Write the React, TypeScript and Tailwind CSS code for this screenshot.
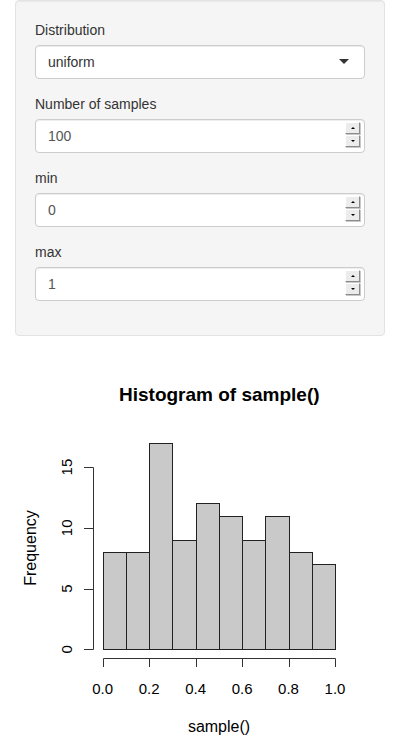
import React from "react";

const font = { fontFamily: '"Liberation Sans", Arial, Helvetica, sans-serif' };

const counts = [8, 8, 17, 9, 12, 11, 9, 11, 8, 7];

// plot geometry (page coordinates, svg viewBox is offset to match)
const X0 = 102.7;
const X1 = 335;
const Y0 = 649.3;
const PER = 12.15;
const bw = (X1 - X0) / 10;
const px = (v: number) => Math.round(v) + 0.5;

const SpinButton = ({ up }: { up: boolean }) => (
  <div className="w-[15px] h-[12px] bg-[#ececec] border border-t-white border-l-white border-r-[#8c8c8c] border-b-[#8c8c8c] shadow-[1px_1px_0_#c8c8c8] flex items-center justify-center">
    {up ? (
      <div className="w-0 h-0 border-l-[2px] border-r-[2px] border-b-[2px] border-l-transparent border-r-transparent border-b-black" />
    ) : (
      <div className="w-0 h-0 border-l-[2px] border-r-[2px] border-t-[2px] border-l-transparent border-r-transparent border-t-black" />
    )}
  </div>
);

const NumberField = ({ label, value }: { label: string; value: string }) => (
  <div className="mb-[15px]">
    <label className="block text-[14px] leading-[20px] text-[#333] mb-[5px]">{label}</label>
    <div className="h-[34px] bg-white border border-[#ccc] rounded-[4px] shadow-[inset_0_1px_1px_rgba(0,0,0,0.075)] flex pl-[12px] pr-[4px]">
      <span className="self-center text-[14px] text-[#555]">{value}</span>
      <div className="ml-auto mt-[2px] flex flex-col gap-[1px]">
        <SpinButton up />
        <SpinButton up={false} />
      </div>
    </div>
  </div>
);

const Histogram = () => {
  const yTicks = [0, 5, 10, 15];
  const xTicks = [0, 0.2, 0.4, 0.6, 0.8, 1.0];
  return (
    <svg width={400} height={400} viewBox="0 356 400 400" className="block mt-[20px]" style={font}>
      <text x={219.3} y={400.5} textAnchor="middle" fontWeight="bold" fontSize={19} fill="#000">
        Histogram of sample()
      </text>
      {counts.map((c, i) => {
        const x = px(X0 + i * bw);
        const x2 = px(X0 + (i + 1) * bw);
        const y = px(Y0 - c * PER);
        return (
          <rect key={i} x={x} y={y} width={x2 - x} height={px(Y0) - y} fill="#c9c9c9" stroke="#222" strokeWidth={1} />
        );
      })}
      {/* y axis */}
      <line x1={93.5} x2={93.5} y1={px(Y0 - 15 * PER)} y2={px(Y0)} stroke="#333" />
      {yTicks.map((v) => (
        <g key={v}>
          <line x1={84} x2={93.5} y1={px(Y0 - v * PER)} y2={px(Y0 - v * PER)} stroke="#333" />
          <text transform={`translate(72, ${Y0 - v * PER}) rotate(-90)`} textAnchor="middle" fontSize={15} fill="#000">
            {v}
          </text>
        </g>
      ))}
      <text transform="translate(36, 548) rotate(-90)" textAnchor="middle" fontSize={16} fill="#000">
        Frequency
      </text>
      {/* x axis */}
      <line x1={px(X0)} x2={px(X1)} y1={658.5} y2={658.5} stroke="#333" />
      {xTicks.map((v) => {
        const x = px(X0 + v * 10 * bw);
        return (
          <g key={v}>
            <line x1={x} x2={x} y1={658.5} y2={667} stroke="#333" />
            <text x={X0 + v * 10 * bw} y={693.5} textAnchor="middle" fontSize={15} fill="#000">
              {v.toFixed(1)}
            </text>
          </g>
        );
      })}
      <text x={219} y={731.5} textAnchor="middle" fontSize={16} fill="#000">
        sample()
      </text>
    </svg>
  );
};

export default function App() {
  return (
    <div className="w-[400px] h-[756px] bg-white overflow-hidden" style={font}>
      <div className="mx-[15px] bg-[#f5f5f5] border border-[#e3e3e3] rounded-[4px] shadow-[inset_0_1px_1px_rgba(0,0,0,0.05)] p-[19px]">
        <div className="mb-[15px]">
          <label className="block text-[14px] leading-[20px] text-[#333] mb-[5px]">Distribution</label>
          <div className="h-[34px] bg-white border border-[#ccc] rounded-[4px] shadow-[inset_0_1px_1px_rgba(0,0,0,0.075)] flex items-center pl-[12px] pr-[15px]">
            <span className="text-[14px] text-[#333]">uniform</span>
            <div className="ml-auto w-0 h-0 border-l-[5px] border-r-[5px] border-t-[5px] border-l-transparent border-r-transparent border-t-[#333] -mt-[1px]" />
          </div>
        </div>
        <NumberField label="Number of samples" value="100" />
        <NumberField label="min" value="0" />
        <NumberField label="max" value="1" />
      </div>
      <Histogram />
    </div>
  );
}
